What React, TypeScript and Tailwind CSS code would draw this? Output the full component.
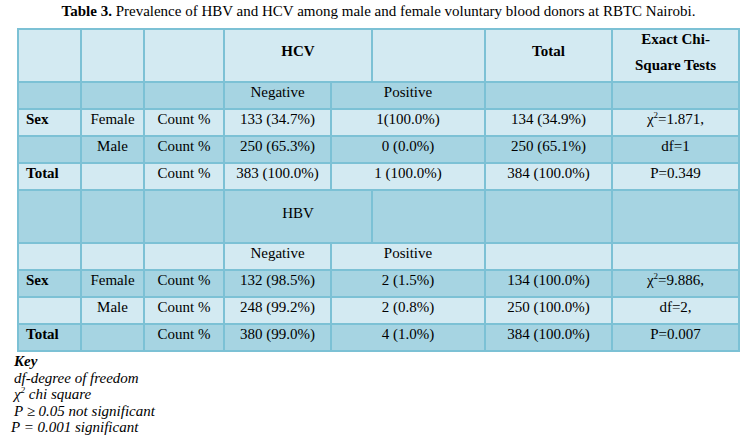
import React from "react";

type Cell = {
  t?: React.ReactNode;
  span?: number;
  b?: boolean;
  left?: boolean;
  pt?: string;
};

const Chi = ({ v }: { v: string }) => (
  <span>
    χ<sup className="text-[9px] relative -top-[6px]">2</sup>={v}
  </span>
);

const rows: { dark: boolean; tall?: boolean; cells: Cell[] }[] = [
  {
    dark: false,
    tall: true,
    cells: [
      {},
      {},
      {},
      { t: "HCV", span: 2, b: true, pt: "pt-[13px]" },
      {},
      { t: "Total", b: true, pt: "pt-[13px]" },
      {
        t: (
          <div className="flex flex-col gap-[9px]">
            <span>Exact Chi-</span>
            <span>Square Tests</span>
          </div>
        ),
        b: true,
        pt: "pt-[1px]",
      },
    ],
  },
  {
    dark: true,
    cells: [{}, {}, {}, { t: "Negative" }, { t: "Positive", span: 2 }, {}, {}],
  },
  {
    dark: false,
    cells: [
      { t: "Sex", b: true, left: true },
      { t: "Female" },
      { t: "Count %" },
      { t: "133 (34.7%)" },
      { t: "1(100.0%)", span: 2 },
      { t: "134 (34.9%)" },
      { t: <Chi v="1.871," /> },
    ],
  },
  {
    dark: true,
    cells: [
      {},
      { t: "Male" },
      { t: "Count %" },
      { t: "250 (65.3%)" },
      { t: "0 (0.0%)", span: 2 },
      { t: "250 (65.1%)" },
      { t: "df=1" },
    ],
  },
  {
    dark: false,
    cells: [
      { t: "Total", b: true, left: true },
      {},
      { t: "Count %" },
      { t: "383 (100.0%)" },
      { t: "1 (100.0%)", span: 2 },
      { t: "384 (100.0%)" },
      { t: "P=0.349" },
    ],
  },
  {
    dark: true,
    tall: true,
    cells: [{}, {}, {}, { t: "HBV", span: 2, pt: "pt-[14px]" }, {}, {}, {}],
  },
  {
    dark: false,
    cells: [{}, {}, {}, { t: "Negative" }, { t: "Positive", span: 2 }, {}, {}],
  },
  {
    dark: true,
    cells: [
      { t: "Sex", b: true, left: true },
      { t: "Female" },
      { t: "Count %" },
      { t: "132 (98.5%)" },
      { t: "2 (1.5%)", span: 2 },
      { t: "134 (100.0%)" },
      { t: <Chi v="9.886," /> },
    ],
  },
  {
    dark: false,
    cells: [
      {},
      { t: "Male" },
      { t: "Count %" },
      { t: "248 (99.2%)" },
      { t: "2 (0.8%)", span: 2 },
      { t: "250 (100.0%)" },
      { t: "df=2," },
    ],
  },
  {
    dark: true,
    cells: [
      { t: "Total", b: true, left: true },
      {},
      { t: "Count %" },
      { t: "380 (99.0%)" },
      { t: "4 (1.0%)", span: 2 },
      { t: "384 (100.0%)" },
      { t: "P=0.007" },
    ],
  },
];

export default function App() {
  return (
    <div
      className="w-[751px] h-[438px] bg-white text-black overflow-hidden"
      style={{ fontFamily: '"Liberation Serif", "Times New Roman", serif' }}
    >
      <div className="ml-[17px] w-[723px] pt-[3px]">
        <div className="text-center text-[15px] leading-[17px] h-[25px]">
          <b>Table 3.</b> Prevalence of HBV and HCV among male and female voluntary blood donors at RBTC Nairobi.
        </div>
        <div className="grid grid-cols-[61px_61px_78px_105px_39px_111px_125px_125px] grid-rows-[51px_25px_25px_25px_25px_51px_25px_25px_25px_25px] gap-[2px] p-[2px] bg-[#7cc1d5] text-[15px] leading-[17px]">
          {rows.map((r, ri) =>
            r.cells.map((c, ci) => (
              <div
                key={`${ri}-${ci}`}
                className={[
                  r.dark ? "bg-[#a6d4e2]" : "bg-[#d3eaf2]",
                  c.span === 2 ? "col-span-2" : "",
                  c.left ? "text-left pl-[7px]" : "text-center",
                  c.b ? "font-bold" : "",
                  c.pt ?? "pt-[1px]",
                  "whitespace-nowrap",
                ].join(" ")}
              >
                {c.t}
              </div>
            ))
          )}
        </div>
      </div>
      <div className="pl-[14px] pt-[1px] text-[15px] leading-[16.5px] italic">
        <div className="font-bold">Key</div>
        <div>df-degree of freedom</div>
        <div>
          χ<sup className="text-[9px] relative -top-[6px]">2</sup> chi square
        </div>
        <div>P ≥ 0.05 not significant</div>
        <div className="-ml-[3px]">P = 0.001 significant</div>
      </div>
    </div>
  );
}
